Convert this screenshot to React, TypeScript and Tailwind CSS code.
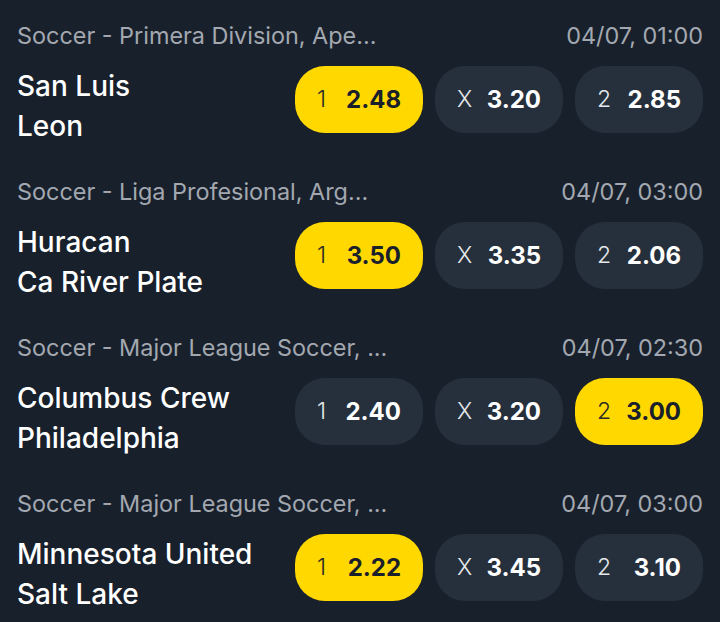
import React from "react";

type Match = {
  league: string;
  time: string;
  home: string;
  away: string;
  odds: [string, string, string];
  selected: number;
};

const matches: Match[] = [
  { league: "Soccer - Primera Division, Ape...", time: "04/07, 01:00", home: "San Luis", away: "Leon", odds: ["2.48", "3.20", "2.85"], selected: 0 },
  { league: "Soccer - Liga Profesional, Arg...", time: "04/07, 03:00", home: "Huracan", away: "Ca River Plate", odds: ["3.50", "3.35", "2.06"], selected: 0 },
  { league: "Soccer - Major League Soccer, ...", time: "04/07, 02:30", home: "Columbus Crew", away: "Philadelphia", odds: ["2.40", "3.20", "3.00"], selected: 2 },
  { league: "Soccer - Major League Soccer, ...", time: "04/07, 03:00", home: "Minnesota United", away: "Salt Lake", odds: ["2.22", "3.45", "3.10"], selected: 0 },
];

const labels = ["1", "X", "2"];

function OddButton({ label, value, active }: { label: string; value: string; active: boolean }) {
  return (
    <div
      className={
        active
          ? "w-[128px] h-[67px] rounded-[30px] bg-[#ffd800] flex items-center justify-between px-[22px]"
          : "w-[128px] h-[67px] rounded-[30px] bg-[#25303c] flex items-center justify-between px-[22px]"
      }
    >
      <span className={active ? "text-[23px] font-light text-[#2a2b26]" : "text-[23px] font-light text-[#e6e8ea]"}>{label}</span>
      <span className={active ? "text-[24px] font-bold text-[#19202b]" : "text-[24px] font-bold text-white"}>{value}</span>
    </div>
  );
}

export default function App() {
  return (
    <div className="w-[720px] h-[622px] bg-[#18202c] overflow-hidden px-[17px] pt-[22px] flex flex-col gap-[32px]" style={{ fontFamily: "Inter, 'Noto Sans', sans-serif" }}>
      {matches.map((m, i) => (
        <div key={i} className="flex flex-col">
          <div className="flex justify-between items-center h-[28px] text-[23.4px] leading-[28px] text-[#a3a8b0]">
            <span>{m.league}</span>
            <span>{m.time}</span>
          </div>
          <div className="mt-[16px] flex justify-between items-start">
            <div className="flex flex-col text-[28px] leading-[40px] font-medium text-white">
              <span>{m.home}</span>
              <span>{m.away}</span>
            </div>
            <div className="flex gap-[12px]">
              {m.odds.map((o, j) => (
                <OddButton key={j} label={labels[j]} value={o} active={m.selected === j} />
              ))}
            </div>
          </div>
        </div>
      ))}
    </div>
  );
}
